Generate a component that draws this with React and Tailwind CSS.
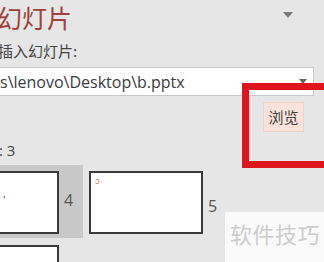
import React from "react";

const cjk = { fontFamily: '"Segoe UI", "Noto Sans CJK SC", "Liberation Sans", sans-serif' };
const latin = { fontFamily: '"Open Sans", "Liberation Sans", sans-serif' };

const Thumb = ({ w, mark, markClass }) => (
  <div className={`relative h-[63px] ${w} border-2 border-[#3a3a3a] bg-white`}>
    {mark && <span className={`absolute text-[9px] leading-none ${markClass}`}>{mark}</span>}
  </div>
);

const App = () => {
  return (
    <div className="relative w-[324px] h-[262px] overflow-hidden bg-[#e6e6e6]" style={cjk}>
      {/* header */}
      <div className="flex items-start justify-between pt-[1px] pr-[31px]">
        <h1 className="ml-[-3px] text-[25px] leading-[32px] text-[#a03f3b]">幻灯片</h1>
        <svg width="10" height="6" viewBox="0 0 10 6" className="mt-[11px]">
          <path d="M0 0 L10 0 L5 6 Z" fill="#7a7a7a" />
        </svg>
      </div>

      <div className="mt-[8px] ml-[-2px] text-[15px] leading-[20px] text-[#444]">插入幻灯片:</div>

      {/* path input */}
      <div className="mt-[6px] ml-[-10px] flex h-[29px] w-[324px] items-center justify-between border border-[#c9c9c9] bg-white pr-[6px]">
        <span className="pl-[9px] text-[16px] text-[#3c3c3c]" style={latin}>
          s\lenovo\Desktop\b.pptx
        </span>
        <svg width="8" height="5" viewBox="0 0 8 5">
          <path d="M0 0 L8 0 L4 5 Z" fill="#666" />
        </svg>
      </div>

      {/* browse button */}
      <div className="mt-[6px] flex justify-end pr-[20px]">
        <button className="h-[30px] w-[41px] border border-[#f0d2c8] bg-[#fbe2da] text-[15px] text-[#444]">浏览</button>
      </div>

      <div className="mt-[8px] ml-[-1px] text-[15px] leading-[20px] text-[#444]" style={latin}>
        : 3
      </div>

      {/* thumbnails */}
      <div className="mt-[5px] flex items-start">
        <div className="flex h-[73px] w-[83px] items-start bg-[#c8c8c8]">
          <div className="ml-[-61px] mt-[6px]">
            <Thumb w="w-[120px]" mark="'" markClass="left-[62px] top-[22px] text-[#333]" />
          </div>
          <span className="ml-[5px] mt-[25px] text-[16px] leading-[20px] text-[#555]" style={latin}>4</span>
        </div>
        <div className="ml-[6px] mt-[6px] flex items-start">
          <Thumb w="w-[114px]" mark="ↄ" markClass="left-[4px] top-[3px] text-[#c07a40]" />
          <span className="ml-[5px] mt-[25px] text-[16px] leading-[20px] text-[#555]" style={latin}>5</span>
        </div>
      </div>
      <div className="mt-[7px] ml-[-61px] h-[30px] w-[120px] border-2 border-[#3a3a3a] bg-white" />

      {/* annotation box */}
      <div className="absolute left-[242px] top-[83px] h-[85px] w-[90px] border-[7px] border-[#e0141c]" />

      {/* watermark */}
      <div className="absolute left-[225px] top-[212px] h-[60px] w-[110px] bg-[#fafafa] pl-[5px] pt-[5px] text-[22px] leading-[32px] tracking-[0.5px] text-[#cdcdcd]">
        软件技巧
      </div>
    </div>
  );
};

export default App;
